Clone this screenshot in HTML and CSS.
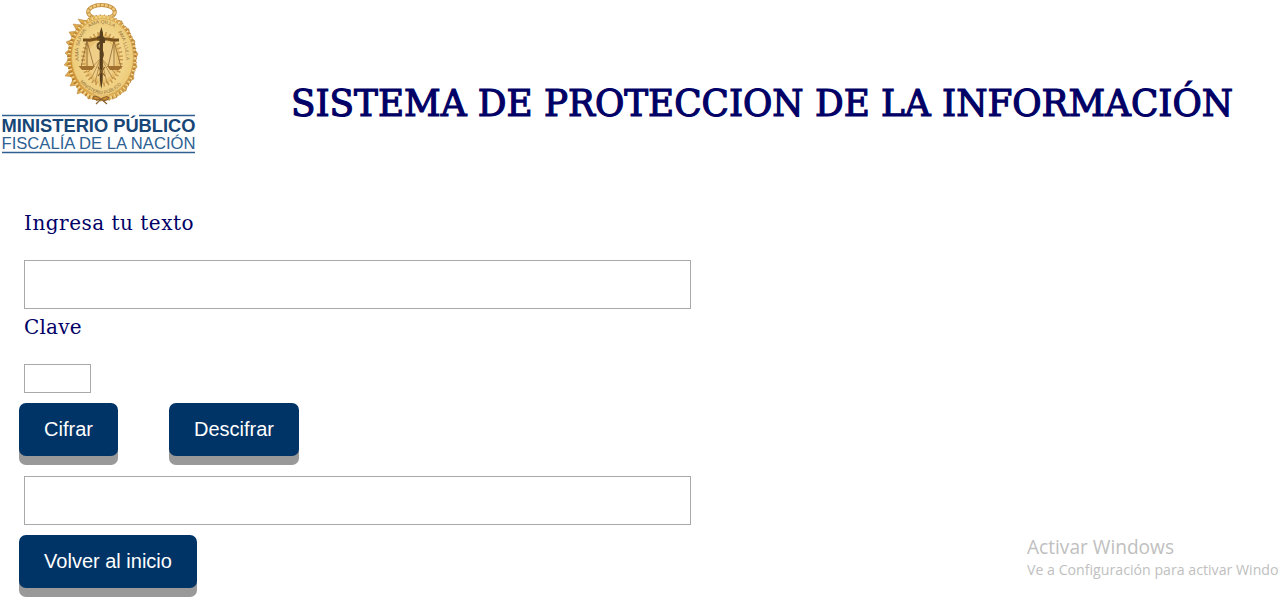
FILE: index.html
```html
<!DOCTYPE html>
<html lang="es">
<head>
<meta charset="utf-8">
<title>Sistema de Protección de la Información</title>
<link rel="stylesheet" href="styles.css">
</head>
<body>
<header class="header">
  <svg class="logo" width="200" height="160" viewBox="0 0 200 160" role="img" aria-label="Ministerio Público">
    <defs>
      <radialGradient id="gold"><stop offset="0" stop-color="#e9c578"/><stop offset=".6" stop-color="#f3d78f"/><stop offset="1" stop-color="#edcb77"/></radialGradient>
      <linearGradient id="rim"><stop offset="0" stop-color="#c98a2d"/><stop offset=".5" stop-color="#edc66a"/><stop offset="1" stop-color="#c18735"/></linearGradient>
      <path id="arc-left" d="M79 61 C77 47 80 37 88 28"/>
      <path id="arc-top" d="M89 27.500 Q102 19 115 28"/>
      <path id="arc-right" d="M118 32 Q126 43 126 62"/>
      <path id="arc-bottom" d="M80 82 Q102 106 124 82"/>
    </defs>
    <ellipse cx="101.500" cy="12" rx="13.300" ry="7" fill="none" stroke="#c18a39" stroke-width="4"/>
    <ellipse cx="101.500" cy="12" rx="13.300" ry="7" fill="none" stroke="#edca7c" stroke-width="2.500" stroke-dasharray="3 1"/>
    <g fill="#dca94e" stroke="#a9712b" stroke-width=".4">
      <path d="M88 21 L78 19 L82 25 L73 24 L77 31 L69 32 L73 39 L66 42 L71 48 L65 53 L70 58 L64 65 L71 68 L65 76 L74 77 L70 86 L79 85 L77 94 L86 91 L88 99 L99 98 L88 90 L78 78 L76 60 L77 40 Z"/>
      <path d="M115 20 L122 21 L123 26 L129 29 L130 36 L135 41 L134 48 L138 54 L135 60 L137 67 L133 72 L134 79 L128 82 L126 91 L119 92 L116 98 L103 99 L116 90 L126 78 L129 60 L125 40 Z"/>
    </g>
    <ellipse cx="102" cy="58" rx="32" ry="40.500" fill="none" stroke="url(#rim)" stroke-width="5"/>
    <ellipse cx="102" cy="58" rx="33.500" ry="42" fill="none" stroke="#a97632" stroke-width="3" stroke-dasharray="1 3"/>
    <ellipse cx="102" cy="58" rx="33" ry="41" fill="none" stroke="#f3d991" stroke-width="3" stroke-dasharray="1.500 2.500"/>
    <ellipse cx="102.500" cy="57" rx="31" ry="38.500" fill="url(#gold)" stroke="#d6a452" stroke-width=".7"/>
    <ellipse cx="102" cy="59" rx="18.500" ry="25" fill="#e8c06f"/>
    <ellipse cx="102" cy="59" rx="19" ry="25.500" fill="none" stroke="#c89748" stroke-width="4" stroke-dasharray="1.500 2.500"/>
    <ellipse cx="102" cy="60" rx="14" ry="20" fill="#efcf87"/>
    <g class="motto">
      <text><textPath href="#arc-left" textLength="33" lengthAdjust="spacingAndGlyphs">AMA SUWA</textPath></text>
      <text><textPath href="#arc-top" textLength="27" lengthAdjust="spacingAndGlyphs">AMA QILLA</textPath></text>
      <text><textPath href="#arc-right" textLength="30" lengthAdjust="spacingAndGlyphs">AMA LLULLA</textPath></text>
      <text><textPath href="#arc-bottom" textLength="48" lengthAdjust="spacingAndGlyphs">MINISTERIO PÚBLICO</textPath></text>
    </g>
    <path d="M101 58 L91 79 M101 58 L95 83 M101 58 L107 83 M101 58 L113 79 M101 58 L88 72 M101 58 L115 73" stroke="#a27436" stroke-width=".7"/>
    <path d="M83 40 H91 Q97 38 101 40 Q106 38 112 40 H119" fill="none" stroke="#77501c" stroke-width="3"/>
    <path d="M87 41 L81 67 M87 41 V66 M87 41 L94 67 M114 41 L108 67 M114 41 V66 M114 41 L121 67" stroke="#8b6533" stroke-width=".8"/>
    <path d="M78.500 66 H95 L92 70 H82 Z M107 66 H123 L119 70 H110 Z" fill="#a1702e"/>
    <path d="M101.500 27 L103 33 L102.700 80 L101.500 89 L99.800 80 L99.500 33 Z" fill="#563d1c"/>
    <path d="M97 38 Q105 34 104 42 Q96 42 98 48 Q105 51 102 58" fill="none" stroke="#5a4020" stroke-width="2"/>
    <path d="M98 67 L105 76 M105 67 L98 76" stroke="#8b6029" stroke-width="1.200"/>
    <path d="M101 99 Q94 94 93 98 Q95 101 101 99 Q107 95 109 98 Q106 102 101 99 L96 104 M101 99 L107 104" fill="#c89136" stroke="#8f602b" stroke-width="1.200"/>
    <path d="M2 115.500 H129 M139 115.500 H195" stroke="#2e5f90" stroke-width="1.400"/>
    <text class="logo-name" x="1.500" y="132" textLength="194" lengthAdjust="spacingAndGlyphs">MINISTERIO PÚBLICO</text>
    <text class="logo-sub" x="1.500" y="149" textLength="194" lengthAdjust="spacingAndGlyphs">FISCALÍA DE LA NACIÓN</text>
    <path d="M2 152.500 H195" stroke="#2e5f90" stroke-width="1.500"/>
  </svg>
  <h1 class="title"><svg class="title-art" width="960" height="60"><text x="1" y="44" textLength="942" lengthAdjust="spacingAndGlyphs">SISTEMA DE PROTECCION DE LA INFORMACIÓN</text></svg></h1>
</header>
<main class="form">
  <label class="label label-text" for="texto">Ingresa tu texto</label>
  <input class="field" id="texto" type="text">
  <label class="label label-key" for="clave">Clave</label>
  <input class="field field-key" id="clave" type="text">
  <div class="actions">
    <button class="button button-cipher">Cifrar</button>
    <button class="button button-decipher">Descifrar</button>
  </div>
  <input class="field" type="text" aria-label="Resultado">
  <button class="button button-home">Volver al inicio</button>
</main>
<aside class="watermark">
  <svg width="252" height="50"><text class="mark-title" x="0" y="20" textLength="147" lengthAdjust="spacingAndGlyphs">Activar Windows</text><text class="mark-text" x="0" y="41" textLength="273" lengthAdjust="spacingAndGlyphs">Ve a Configuración para activar Windows.</text></svg>
</aside>
</body>
</html>
```
FILE: styles.css
```css
* { box-sizing: border-box; }
body { margin: 0; height: 603px; overflow: hidden; background: #fff; color: #006; font-family: "Liberation Sans", Arial, sans-serif; }
.header { display: flex; height: 200px; }
.logo { display: block; flex: none; }
.motto { font-family: "Liberation Sans", sans-serif; font-size: 4.8px; fill: #92703f; }
.logo-name { font-size: 18px; font-weight: bold; fill: #164576; }
.logo-sub { font-size: 16px; fill: #2e6293; }
.title { margin: 72px 0 0 90px; line-height: 0; }
.title-art { display: block; font-family: "DejaVu Serif Condensed", "DejaVu Serif", serif; font-size: 36.5px; font-weight: normal; font-stretch: condensed; fill: #006; stroke: #006; stroke-width: 1.1px; }
.form { display: flex; flex-direction: column; align-items: flex-start; padding-left: 24px; }
.label { display: block; font-family: "DejaVu Serif", serif; font-size: 20px; line-height: 28px; white-space: nowrap; }
.label-text { margin: 9px 0 23px; letter-spacing: .5px; }
.label-key { margin: 4px 0 23px; letter-spacing: .2px; }
.field { display: block; width: 667px; height: 49px; margin: 0; border: 1px solid #a9a9a9; background: #fff; outline: none; font-size: 20px; }
.field-key { width: 67px; height: 29px; }
.actions { display: flex; gap: 51px; margin: 10px 0 20px -5px; }
.button { height: 53px; padding: 0; border: 0; border-radius: 7px; background: #036; color: #fff; box-shadow: 0 9px #999; font: 20px "Liberation Sans", Arial, sans-serif; }
.button-cipher { width: 99px; }
.button-decipher { width: 130px; }
.button-home { width: 178px; margin: 10px 0 0 -5px; }
.watermark { position: absolute; right: 0; bottom: 19px; height: 50px; font-family: "Open Sans", "Noto Sans", sans-serif; fill: #c0c0c0; }
.mark-title { font-size: 19.5px; }
.mark-text { font-size: 14px; }
```
